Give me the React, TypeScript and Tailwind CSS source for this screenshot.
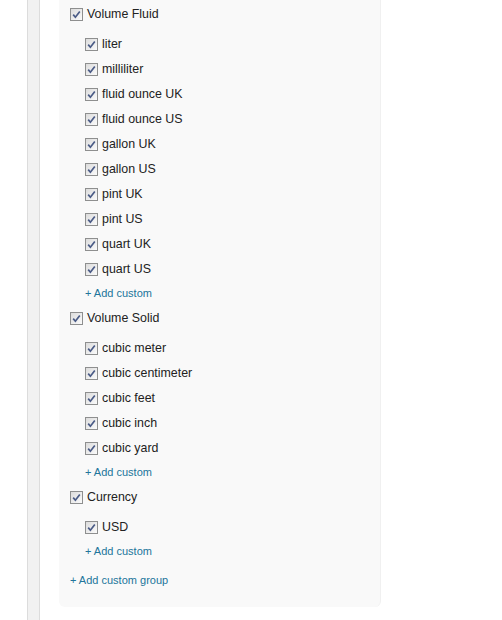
import React from "react";

const groups = [
  {
    name: "Volume Fluid",
    units: ["liter", "milliliter", "fluid ounce UK", "fluid ounce US", "gallon UK", "gallon US", "pint UK", "pint US", "quart UK", "quart US"],
  },
  {
    name: "Volume Solid",
    units: ["cubic meter", "cubic centimeter", "cubic feet", "cubic inch", "cubic yard"],
  },
  {
    name: "Currency",
    units: ["USD"],
  },
];

function Check() {
  return (
    <span className="flex h-[13px] w-[13px] shrink-0 items-center justify-center border border-[#8e8f8f] bg-gradient-to-br from-[#dcdcdc] to-[#fbfbfb]">
      <svg width="9" height="9" viewBox="0 0 9 9">
        <path d="M1.2 4.6 L3.4 7.2 L7.8 1.4" fill="none" stroke="#4a5b86" strokeWidth="1.7" />
      </svg>
    </span>
  );
}

function Row({ label }: { label: string }) {
  return (
    <label className="flex h-[25px] items-center gap-[4px]">
      <Check />
      <span>{label}</span>
    </label>
  );
}

export default function App() {
  return (
    <div className="flex min-h-[620px] bg-white font-['Liberation_Sans',Arial,sans-serif] text-[12.4px] text-[#222]">
      <div className="w-[27px] shrink-0" />
      <div className="w-[13px] shrink-0 border-x border-[#dcdcdc] bg-[#f1f1f1]" />
      <div className="w-[19px] shrink-0" />
      <div className="h-[607px] w-[322px] rounded-b-[6px] border-r border-[#f0f0f0] bg-[#f9f9f9] pl-[11px] pt-[1.5px]">
        {groups.map((g) => (
          <div key={g.name}>
            <Row label={g.name} />
            <div className="mt-[5px] pl-[15px]">
              {g.units.map((u) => (
                <Row key={u} label={u} />
              ))}
              <a className="flex h-[24px] items-center text-[11px] text-[#21759b]">+ Add custom</a>
            </div>
          </div>
        ))}
        <a className="mt-[5px] flex h-[24px] items-center text-[11px] text-[#21759b]">+ Add custom group</a>
      </div>
    </div>
  );
}
